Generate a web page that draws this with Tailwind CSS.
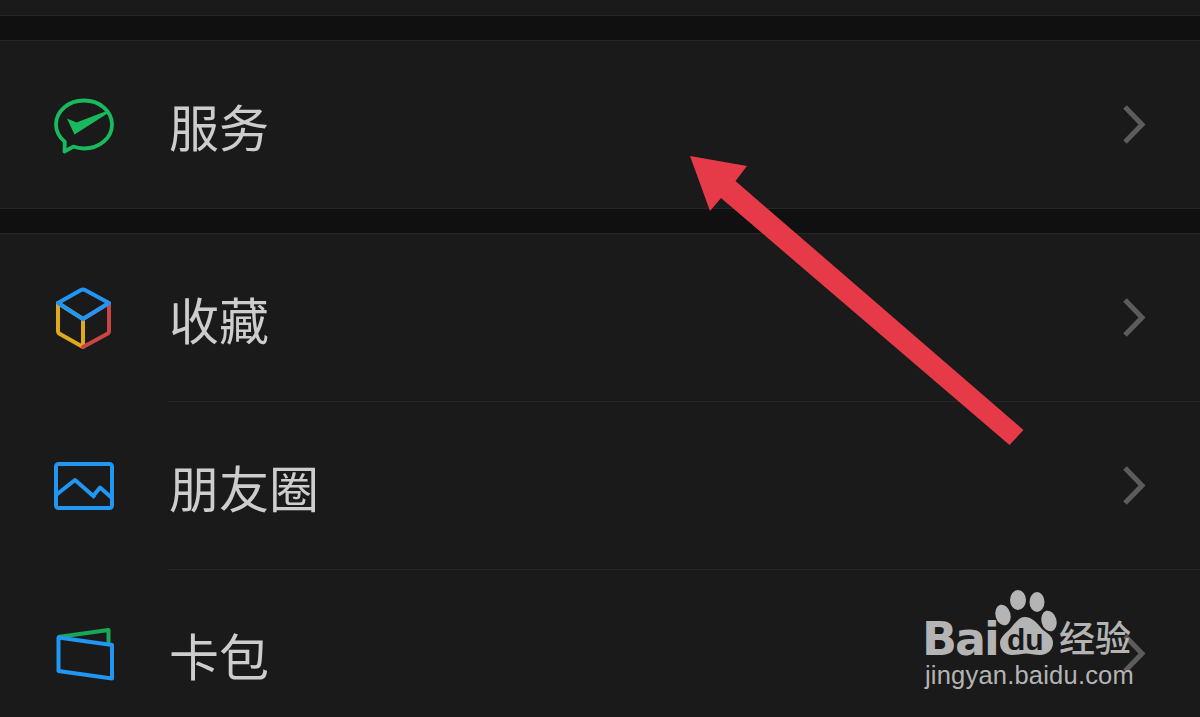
<!DOCTYPE html>
<html lang="zh-CN">
<head>
  <meta charset="UTF-8">
  <title>我</title>
  <script src="https://cdn.jsdelivr.net/npm/@tailwindcss/browser@4"></script>
</head>
<body class="bg-[#1a1a1a]">
  <div class="relative h-[717px] w-[1200px] overflow-hidden bg-[#1a1a1a] font-['Noto_Sans_CJK_SC','Noto_Sans',sans-serif] text-[#cdcdcd]">

    <div class="h-[15px] bg-[#1a1a1a]"></div>
    <div class="h-[26px] border-y border-[#262626] bg-[#101010]"></div>

    <!-- services -->
    <div class="flex h-[167px] items-center pl-[54px] pr-[54px]">
      <svg class="h-[60px] w-[60px] shrink-0 overflow-visible" viewBox="54 94 60 60" fill="none">
        <path d="M64.800 140.800C59.500 136.300 56 130.500 56 123.500C56 110 68.500 99.500 84 99.500C99.500 99.500 112 110 112 123.500C112 137 99.500 147.500 84 147.500C80 147.500 76.500 146.900 73.300 145.600L64.500 150.500Z" stroke="#19b95e" stroke-width="3.800" stroke-linejoin="round"/>
        <path d="M67 117.500L76.500 121.500L106.500 110L107.500 112.500L74.500 133.500Z" fill="#19b95e"/>
      </svg>
      <span class="ml-[55px] text-[50px] leading-none">服务</span>
      <svg class="ml-auto h-[44px] w-[26px] shrink-0" viewBox="0 0 26 44" fill="none"><path d="M5 4L22 21.500L5 39" stroke="#5c5c5c" stroke-width="5"/></svg>
    </div>

    <div class="h-[26px] border-y border-[#262626] bg-[#101010]"></div>

    <!-- list -->
    <div class="flex h-[167px] items-center pl-[54px] pr-[54px]">
      <svg class="h-[60px] w-[60px] shrink-0 overflow-visible" viewBox="54 288 60 60" fill="none" stroke-width="4" stroke-linecap="round" stroke-linejoin="round">
        <path d="M58 303L83 319L83 347L60 334Q58 333 58 331Z" stroke="#dfa91f"/>
        <path d="M83 319L109 303L109 331Q109 333 107 334L83 347" stroke="#c94545"/>
        <path d="M58 303L81 290Q83 289 85 290L109 303L83 319Z" stroke="#2196f3"/>
      </svg>
      <span class="ml-[55px] text-[50px] leading-none">收藏</span>
      <svg class="ml-auto h-[44px] w-[26px] shrink-0" viewBox="0 0 26 44" fill="none"><path d="M5 4L22 21.500L5 39" stroke="#5c5c5c" stroke-width="5"/></svg>
    </div>

    <div class="ml-[168px] h-px bg-[#262626]"></div>

    <div class="flex h-[167px] items-center pl-[54px] pr-[54px]">
      <svg class="h-[60px] w-[60px] shrink-0 overflow-visible" viewBox="54 456 60 60" fill="none" stroke="#2196f3" stroke-width="4" stroke-linejoin="round">
        <rect x="56" y="464" width="56" height="44" rx="2.500"/>
        <path d="M56 495L75 480L95 497.500M94 495L100 487.500L112 498"/>
      </svg>
      <span class="ml-[55px] text-[50px] leading-none">朋友圈</span>
      <svg class="ml-auto h-[44px] w-[26px] shrink-0" viewBox="0 0 26 44" fill="none"><path d="M5 4L22 21.500L5 39" stroke="#5c5c5c" stroke-width="5"/></svg>
    </div>

    <div class="ml-[168px] h-px bg-[#262626]"></div>

    <div class="flex h-[167px] items-center pl-[54px] pr-[54px]">
      <svg class="h-[60px] w-[60px] shrink-0 overflow-visible" viewBox="54 624 60 60" fill="none" stroke-width="4" stroke-linejoin="round">
        <path d="M58 637L108.500 630V644" stroke="#19a858"/>
        <path d="M58.500 637.500L112 645V678.500L58.500 671Z" stroke="#2196f3"/>
      </svg>
      <span class="ml-[55px] text-[50px] leading-none">卡包</span>
      <svg class="ml-auto h-[44px] w-[26px] shrink-0" viewBox="0 0 26 44" fill="none"><path d="M5 4L22 21.500L5 39" stroke="#5c5c5c" stroke-width="5"/></svg>
    </div>

    <!-- red arrow on top of the screenshot -->
    <svg class="absolute left-0 top-0 h-[717px] w-[1200px]" viewBox="0 0 1200 717">
      <path d="M690 156L747 166L735.500 181L1023.500 430L1009.500 445L721 198L710 211Z" fill="#e63a48"/>
    </svg>

    <!-- watermark -->
    <div class="absolute left-[922px] top-[588px] w-[216px] text-[#b4b4b4]">
      <div class="relative h-[76px]">
        <span class="absolute left-0 top-[23px] font-['DejaVu_Sans'] text-[46px] font-bold leading-[56px] tracking-[-2px]">Bai</span>
        <svg class="absolute left-[70px] top-0 h-[76px] w-[70px]" viewBox="70 0 70 76" fill="currentColor">
          <ellipse cx="96" cy="12" rx="8" ry="10"/>
          <ellipse cx="115" cy="14" rx="7.500" ry="10"/>
          <ellipse cx="81" cy="27" rx="7.500" ry="10.500" transform="rotate(-15 81 27)"/>
          <ellipse cx="127" cy="33" rx="7.500" ry="10.500" transform="rotate(-15 127 33)"/>
          <path d="M103 29C110 29 115 35 120 41C126 46 131 48 131 55C131 63 124 67 118 67C112 67 108 65.500 104 65.500C100 65.500 96 67 90 67C84 67 78 63 78 55C78 49 84 45 88 41C93 35 97 29 103 29Z"/>
        </svg>
        <span class="absolute left-[85px] top-[37px] font-['Liberation_Sans'] text-[30px] font-bold leading-[30px] text-[#1a1a1a]">du</span>
        <span class="absolute left-[137px] top-[26px] text-[36px] font-medium leading-[44px] whitespace-nowrap">经验</span>
      </div>
      <div class="-mt-[3px] whitespace-nowrap pl-[3px] font-['Liberation_Sans'] text-[25.500px] leading-[28px] tracking-[0.2px]">jingyan.baidu.com</div>
    </div>
  </div>
</body>
</html>
